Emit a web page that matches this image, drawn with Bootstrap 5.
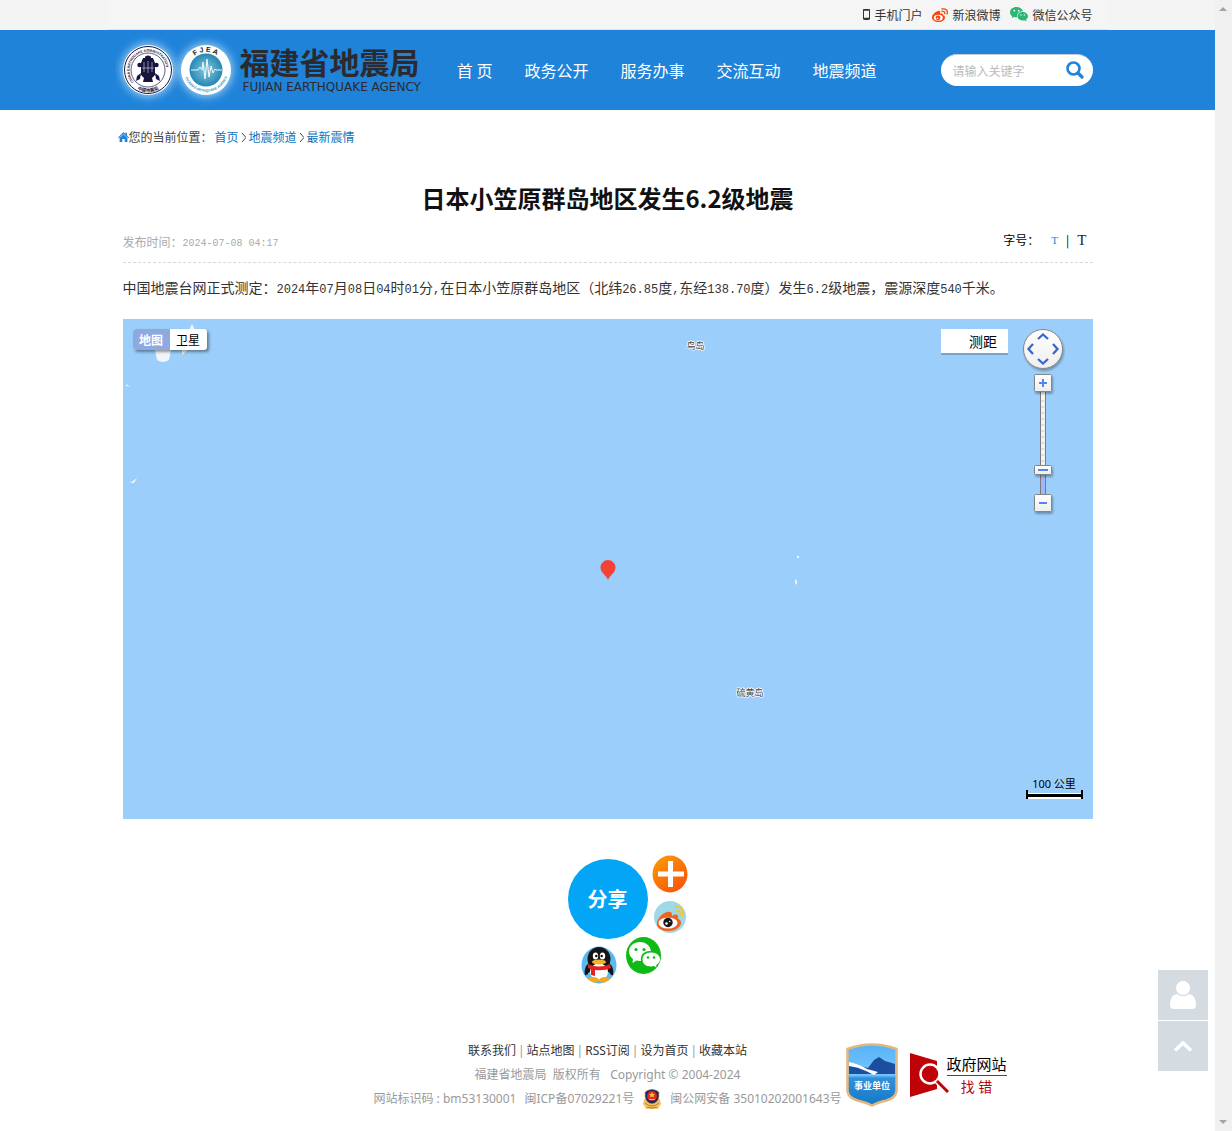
<!DOCTYPE html>
<html lang="zh-CN">
<head>
<meta charset="utf-8">
<meta name="viewport" content="width=device-width, initial-scale=1">
<title>日本小笠原群岛地区发生6.2级地震 - 福建省地震局</title>
<link href="https://cdn.jsdelivr.net/npm/bootstrap@5.3.0/dist/css/bootstrap.min.css" rel="stylesheet">
<script src="https://cdn.jsdelivr.net/npm/bootstrap@5.3.0/dist/js/bootstrap.bundle.min.js"></script>
<style>
body{font:12px/24px "Noto Sans CJK SC",sans-serif;color:#333;background:#fff;padding-right:17px}
a{color:inherit;text-decoration:none}
svg{display:block;flex:none}
.wrap{max-width:1000px;padding:0 15px}
.topbar{background:#f4f4f4}
.topbar .wrap{height:30px;background:#f5f5f5;border-bottom:1px solid #dfe3e8;gap:10px}
.topbar a{gap:4px}
.site-head{background:#1f83d9}
.site-head .wrap{min-height:80px}
.brand{color:#2c2a2e;margin-left:-8px}
.brand-name{font-size:30px;line-height:30px;font-weight:700}
.brand-en{font:12px/14px "DejaVu Sans",sans-serif;margin:4px 0 0 3px}
.site-nav{gap:32px;font-size:16px;color:#fff;margin-right:64px}
.search-box{width:152px;height:32px;border-radius:16px;background:#fff;border-top:1px solid #c4cdd6;padding:0 9px 0 12px}
.search-box input{border:0;outline:0;background:none;font-size:12px;padding:0;min-width:0}
.search-box input::placeholder{color:#bbb}
.search-box button{margin-bottom:2px}
.plain{border:0;background:none;padding:0}
.crumbs{padding:15px 10px 0;color:#444}
.crumbs a,.crumbs a:hover{color:#0f73bb}
.crumbs .sep{margin:0 3px}
.crumbs .here{margin-right:2px}
.art-title{font-size:24px;line-height:36px;font-weight:700;color:#111;margin:31px 0 14px}
.meta-row{height:33px;border-bottom:1px dashed #d9d9d9;color:#aaa}
.mono-date{font:10px/10px "Liberation Mono",monospace;vertical-align:1px}
.size-tool{height:20px;color:#000;padding-right:6px}
.size-tool button{font-family:"Liberation Serif",serif;line-height:20px;color:#222}
.size-tool .t-small{font-size:11px;color:#1f83d9;margin-left:4px}
.size-tool .t-large{font-size:15px}
.art-text{font-size:14px;line-height:24px;margin:12px 0 20px}
.num{font:12px/12px "Liberation Mono",monospace}
.map-area{height:500px;background:#9bcefa;overflow:hidden;color:#000}
.map-area>*{position:absolute}
.map-types{left:10px;top:10px;background:#fff;border-radius:3px;box-shadow:2px 2px 3px rgba(0,0,0,.4);overflow:hidden}
.map-types button{line-height:21px;width:37px;color:#000}
.map-types .on{background:#8ea8e0;color:#fff;font-weight:700}
.ruler{right:85px;top:10px;width:67px;line-height:24px;background:#fff;border-bottom:2px solid #79a5cd!important;font-size:14px;padding-left:18px}
.place{font-size:9px;line-height:12px;color:#444;text-shadow:1px 0 #fff,-1px 0 #fff,0 1px #fff,0 -1px #fff}
.zoomer{right:28px;top:8px}
.scale-bar{right:10px;bottom:20px;width:57px;text-align:center;font:11px/12px "Noto Sans","Noto Sans CJK SC",sans-serif}
.scale-bar i{display:block;height:9px;border:solid #000;border-width:0 2px;background:linear-gradient(#9bcefa 3px,#fff 3px,#fff 4px,#000 4px,#000 7px,#fff 7px)}
.share{width:160px;height:140px;margin:31px auto 0}
.share>*{position:absolute}
.share-main{left:40px;top:9px;width:80px;height:80px;border-radius:50%;background:#03a5f7;color:#fff;font-size:20px;font-weight:700}
.foot{font-family:"Noto Sans","Noto Sans CJK SC",sans-serif;color:#999;padding:49px 0 20px}
.foot a{color:#333}
.foot-links{gap:2px}
.foot-codes{gap:8px}
.side{flex:1 1 0}
.badges{gap:12px}
.find-err{font-size:15px;line-height:21px;color:#000!important}
.find-err span{margin-left:-2px}
.find-err b{font-weight:400;display:block;text-align:center}
.find-err b+b{color:#b7060b;border-top:1px solid #c4141b;font-size:14px}
.dock{right:24px;bottom:60px;gap:1px;z-index:5}
.dock a{width:50px;height:50px;background:#d4dbe1}
.rail{right:0;top:0;bottom:0;width:17px;background:#f0f0f0;padding:7px 0 7px 4px;z-index:6}
</style>
</head>
<body>
<div class="topbar">
  <div class="wrap mx-auto d-flex align-items-center justify-content-end">
    <a href="#" class="d-flex align-items-center"><svg width="7" height="11" viewBox="0 0 7 11"><rect x=".5" y=".5" width="6" height="10" rx="1" fill="#f5f5f5" stroke="#333"/><path d="M0 1h7M0 9.500h7" stroke="#333" stroke-width="1.500"/></svg>手机门户</a>
    <a href="#" class="d-flex align-items-center"><svg width="16" height="14" viewBox="0 0 16 14"><path d="M6 3C3 4 0 7 0 9.500 0 12 3 14 6.500 14S13 12 13 9.500c0-1.300-1-2-2-2.200.5-1.500-.6-2.500-3-1.500C8.500 3.500 8 2.500 6 3" fill="#f9470b"/><ellipse cx="6.300" cy="9.700" rx="4.500" ry="3" fill="#fff"/><circle cx="6" cy="9.800" r="2.400" fill="#f9470b"/><circle cx="5.500" cy="10.300" r=".8" fill="#fff"/><path d="M10 1c4-1 6.300 2 5 5M10 3.400c2-.5 3.200.8 2.700 2.300" fill="none" stroke="#f9470b" stroke-width="1.300" stroke-linecap="round"/></svg>新浪微博</a>
    <a href="#" class="d-flex align-items-center"><svg width="18" height="15" viewBox="0 0 18 15"><path d="M6.500 0C2.800 0 0 2.300 0 5.200c0 1.700.9 3.100 2.300 4.100L1.700 11l2.400-1.100c1 .3 2 .4 3 .3C6.500 7 9 4.200 13 4.300 12.300 1.700 9.700 0 6.500 0M12.500 5C9.600 5 7.500 7 7.500 9.300s2.200 4.200 5 4.200c.7 0 1.300-.1 1.900-.3L16.500 14.500 16 12.500c1.200-.8 2-1.900 2-3.200C18 7 15.500 5 12.500 5" fill="#2bb673"/><g fill="#fff"><circle cx="4.300" cy="3.700" r=".9"/><circle cx="8.700" cy="3.700" r=".9"/><circle cx="11" cy="8" r=".7"/><circle cx="14.300" cy="8" r=".7"/></g></svg>微信公众号</a>
  </div>
</div>
<header class="site-head">
  <div class="wrap mx-auto d-flex align-items-center">
    <a href="#" class="brand d-flex align-items-center">
      <svg width="125" height="80" viewBox="0 0 125 80">
        <defs><filter id="glow" x="-30%" y="-30%" width="160%" height="160%"><feGaussianBlur stdDeviation="4"/></filter>
        <radialGradient id="sea"><stop stop-color="#86c9dc"/><stop offset="1" stop-color="#2487b5"/></radialGradient>
        <path id="arcA" d="M18.800 51.900A18.500 18.500 0 1 1 47.200 51.900"/><path id="arcB" d="M18.900 56.900A22 22 0 0 0 47.100 56.900"/><path id="arcC" d="M75 31A18.500 18.500 0 0 1 108 33"/><path id="arcD" d="M69 44A22.500 22.500 0 0 0 113 44"/></defs>
        <g fill="#bfe2fb" opacity=".75" filter="url(#glow)"><circle cx="33" cy="40" r="27"/><circle cx="91" cy="40" r="27"/></g>
        <circle cx="33" cy="40" r="25" fill="#fff"/><circle cx="33" cy="40" r="23.500" fill="none" stroke="#151540"/><circle cx="33" cy="40" r="17" fill="none" stroke="#151540" stroke-width=".7"/>
        <text font-family="Liberation Sans" font-size="3.500" font-weight="700" fill="#151540"><textPath href="#arcA">CHINA EARTHQUAKE ADMINISTRATION</textPath></text>
        <text font-family="Noto Sans CJK SC" font-size="4.500" font-weight="700" fill="#151540"><textPath href="#arcB" startOffset="4">中国地震局</textPath></text>
        <g fill="#151540"><path d="M28 28h10l2 5v12l-4 4h-6l-4-4V33z"/><ellipse cx="33" cy="27.500" rx="3" ry="2"/><circle cx="24.500" cy="35" r="2.200"/><circle cx="41.500" cy="35" r="2.200"/><path d="M29 48h8l1 4H28zM22 46l4-3-1 6-4 2zM44 46l-4-3 1 6 4 2z"/></g><path d="M27 38h12M29 32v10M33 31v12M37 32v10" stroke="#fff" stroke-width=".5"/>
        <circle cx="91" cy="40" r="25" fill="#fff"/><circle cx="91" cy="40" r="16.500" fill="url(#sea)"/>
        <path d="M76 40h7l2-3 2 3 1-8 2 17 2-20 2 18 2-11 2 7 2-4 1 1h6" fill="none" stroke="#fff" stroke-width=".9"/>
        <text font-family="Liberation Sans" font-size="7" font-weight="700" fill="#222"><textPath href="#arcC" startOffset="7">F J E A</textPath></text>
        <text font-family="Liberation Sans" font-size="3.500" font-weight="700" fill="#2592c4"><textPath href="#arcD" startOffset="4">FUJIAN EARTHQUAKE AGENCY</textPath></text>
      </svg>
      <span><span class="brand-name d-block text-nowrap">福建省地震局</span><span class="brand-en d-block text-nowrap">FUJIAN EARTHQUAKE AGENCY</span></span>
    </a>
    <nav class="site-nav d-flex ms-auto text-nowrap"><a href="#">首 页</a><a href="#">政务公开</a><a href="#">服务办事</a><a href="#">交流互动</a><a href="#">地震频道</a></nav>
    <form class="search-box d-flex align-items-center">
      <input class="flex-grow-1" type="search" placeholder="请输入关键字" aria-label="请输入关键字">
      <button class="plain" type="button" aria-label="搜索"><svg width="18" height="18" viewBox="0 0 18 18" fill="none" stroke="#1f83d9"><circle cx="7.500" cy="7.500" r="6" stroke-width="2.600"/><path d="M12 12l4 4" stroke-width="3.200" stroke-linecap="round"/></svg></button>
    </form>
  </div>
</header>
<main>
  <div class="wrap crumbs mx-auto d-flex align-items-center">
    <svg width="11" height="10" viewBox="0 0 11 10" fill="#1f83d9"><path d="M5.500 0L7.500 2V.8h1.500v2.700L11 5.400l-.7.800L5.500 1.800.7 6.200 0 5.400z"/><path d="M5.500 2.200l3.900 3.700V10H6.700V7H4.300v3H1.600V5.900z"/></svg>
    <span class="here">您的当前位置：</span><a href="#">首页</a><svg class="sep" width="4" height="9" viewBox="0 0 4 9"><path d="M0 0l4 4.500L0 9" fill="none" stroke="#444"/></svg><a href="#">地震频道</a><svg class="sep" width="4" height="9" viewBox="0 0 4 9"><path d="M0 0l4 4.500L0 9" fill="none" stroke="#444"/></svg><a href="#">最新震情</a>
  </div>
  <article class="wrap mx-auto">
    <h1 class="art-title text-center">日本小笠原群岛地区发生6.2级地震</h1>
    <div class="meta-row d-flex justify-content-between">
      <span>发布时间：<time class="mono-date">2024-07-08 04:17</time></span>
      <div class="size-tool d-flex align-items-center gap-2"><span>字号：</span><button class="plain t-small">T</button><span>|</span><button class="plain t-large">T</button></div>
    </div>
    <p class="art-text">中国地震台网正式测定：<span class="num">2024</span>年<span class="num">07</span>月<span class="num">08</span>日<span class="num">04</span>时<span class="num">01</span>分<span class="num">,</span>在日本小笠原群岛地区（北纬<span class="num">26.85</span>度<span class="num">,</span>东经<span class="num">138.70</span>度）发生<span class="num">6.2</span>级地震，震源深度<span class="num">540</span>千米。</p>
    <div class="map-area position-relative">
      <svg width="90" height="170" viewBox="0 0 90 170" fill="#f1f5fb"><path d="M32 31h16l-2 10q-6 4-12 0zM66 11l3-6 3 6zM59 31h6l-6 5zM3 65l4 3-4-1zM7 164l7-5-3 5z"/></svg>
      <svg style="left:670px;top:234px" width="10" height="34" viewBox="0 0 10 34" fill="#f1f5fb"><path d="M4 2l3 3H4zM2 26l2 2v4l-2-2z"/></svg>
      <div class="map-types d-flex"><button class="plain on">地图</button><button class="plain">卫星</button></div>
      <button class="plain ruler">测距</button>
      <span class="place" style="left:564px;top:21px">鸟岛</span>
      <span class="place" style="left:614px;top:368px">硫黄岛</span>
      <svg class="top-50 start-50 translate-middle" width="16" height="40" viewBox="0 0 16 40"><path d="M8 31c-1-4-7.500-7-7.500-12.500a7.500 7.500 0 0 1 15 0C15.500 24 9 27 8 31" fill="#f44336"/></svg>
      <svg class="zoomer" width="44" height="190" viewBox="0 0 44 190">
        <defs><linearGradient id="btn" x2="0" y2="1"><stop stop-color="#fff"/><stop offset="1" stop-color="#eee"/></linearGradient><filter id="sh" x="-20%" y="-20%" width="150%" height="150%"><feDropShadow dx="1" dy="2" stdDeviation="1" flood-opacity=".3"/></filter></defs>
        <path d="M20 64h5v103h-5z" fill="#f4f4f4"/><path d="M20 146h5v21h-5z" fill="#9db8fb"/><path d="M19.500 65v102M24.500 65v102" stroke="#7a7a7a"/><path d="M20 74h5M20 80h5M20 86h5M20 92h5M20 98h5M20 104h5M20 110h5M20 116h5M20 122h5M20 128h5M20 134h5M20 152h5M20 159h5" stroke="#aaa" stroke-width=".5"/>
        <g fill="url(#btn)" stroke="#858585" filter="url(#sh)"><circle cx="22" cy="22" r="19.500"/><rect x="13.500" y="47.500" width="17" height="17" rx="1"/><rect x="13.500" y="138.500" width="17" height="9" rx="1"/><rect x="13.500" y="167.500" width="17" height="17" rx="1"/></g>
        <path d="M17 12l5-4.500 5 4.500M17 32l5 4.500 5-4.500M12 17l-4.500 5 4.500 5M32 17l4.500 5-4.500 5" fill="none" stroke="#3968cc" stroke-width="2.300"/><path d="M18 56h8M22 52v8M17 143h10M18 176h8" stroke="#5585ec" stroke-width="2"/>
      </svg>
      <div class="scale-bar">100 公里<i></i></div>
    </div>
    <div class="share position-relative">
      <button class="plain share-main">分享</button>
      <a href="#" aria-label="更多" style="left:124px;top:5px"><svg width="36" height="38" viewBox="0 0 36 38"><defs><linearGradient id="or" x2=".7" y2="1"><stop stop-color="#fb9f07"/><stop offset="1" stop-color="#fa5409"/></linearGradient></defs><ellipse cx="18" cy="19" rx="17.500" ry="18.500" fill="url(#or)"/><path d="M18.500 6v26M6 19h26" stroke="#fff" stroke-width="5"/></svg></a>
      <a href="#" aria-label="新浪微博" style="left:126px;top:51px"><svg width="33" height="33" viewBox="0 0 33 33"><circle cx="16" cy="16" r="16" fill="#9fd8e8"/><path d="M13 11c-5 1-11 8-10 13 1 4 6 6 12 6 7 0 13-5 12-9-.5-2-2-3-3-3 1-4-1-6-6-3 0-4-1-5-5-4" fill="#f06318"/><ellipse cx="14" cy="22" rx="9.500" ry="5.500" fill="#fff"/><circle cx="14" cy="21.500" r="4.700" fill="#161616"/><circle cx="12.500" cy="22.500" r="1.300" fill="#fff"/><circle cx="15.800" cy="20.500" r=".8" fill="#fff"/><path d="M21 6c6-2 10 4 7 10M22 10c3-.5 5 1.500 4 4" fill="none" stroke="#efc83a" stroke-width="2"/></svg></a>
      <a href="#" aria-label="微信" style="left:98px;top:87px"><svg width="36" height="38" viewBox="0 0 36 38"><defs><clipPath id="wc"><ellipse cx="17.500" cy="18.500" rx="17.500" ry="18.500"/></clipPath></defs><ellipse cx="17.500" cy="18.500" rx="17.500" ry="18.500" fill="#0fb916"/><path d="M14 5C8 5 3 9 3 14.500c0 3 1.500 5.500 4 7.500l-.5 4 4-2.500c1.500.4 3 .5 4.500.4C14 18 18 13.500 25 14 24 8 19 5 14 5" fill="#fff"/><path clip-path="url(#wc)" d="M25 15c-5 0-9 3-9 7.500s4 7.500 9 7.500c1 0 2-.2 3-.5l3.500 2-1-3.200c2.300-1.500 4-3.500 4-5.800C34.500 18 30 15 25 15" fill="#fff" stroke="#0fb916"/><g fill="#0fb916"><circle cx="10" cy="12.500" r="1.600"/><circle cx="18" cy="12.500" r="1.600"/><circle cx="22" cy="20.500" r="1.300"/><circle cx="28" cy="20.500" r="1.300"/></g></svg></a>
      <a href="#" aria-label="QQ" style="left:53px;top:96px"><svg width="36" height="38" viewBox="0 0 36 38"><defs><clipPath id="qc"><ellipse cx="18" cy="19" rx="17.500" ry="18.500"/></clipPath></defs><g clip-path="url(#qc)"><path fill="#5abaf0" d="M0 0h36v38H0z"/><path d="M8 17c-4 3-5 8-4 12 1 1 3-1 4-3h20c1 2 3 4 4 3 1-4 0-9-4-12z" fill="#151515"/><ellipse cx="18" cy="13" rx="11.500" ry="12" fill="#151515"/><ellipse cx="18" cy="26" rx="9" ry="8.500" fill="#fff"/><ellipse cx="14.500" cy="10" rx="2.700" ry="3.500" fill="#fff"/><ellipse cx="21.500" cy="10" rx="2.700" ry="3.500" fill="#fff"/><circle cx="15.300" cy="10" r="1.200"/><circle cx="20.700" cy="10" r="1.200"/><ellipse cx="18" cy="16" rx="7" ry="2.500" fill="#f5b326"/><path d="M7 18q11 5 22 0l1 4q-6 3-16 2v6l-4-1v-6l-3-1z" fill="#e42020"/><ellipse cx="12" cy="34" rx="6" ry="3" fill="#f5a81c"/><ellipse cx="24" cy="34" rx="6" ry="3" fill="#f5a81c"/></g></svg></a>
    </div>
  </article>
</main>
<footer class="foot d-flex align-items-center">
  <div class="side"></div>
  <div class="text-center text-nowrap">
    <div class="foot-links d-flex justify-content-center"><a href="#">联系我们</a>|<a href="#">站点地图</a>|<a href="#">RSS订阅</a>|<a href="#">设为首页</a>|<a href="#">收藏本站</a></div>
    <div>福建省地震局&nbsp; 版权所有 &nbsp; Copyright © 2004-2024</div>
    <div class="foot-codes d-flex align-items-center"><span>网站标识码 : bm53130001</span><span>闽ICP备07029221号</span><svg width="20" height="20" viewBox="0 0 20 20"><path d="M2 10l-1 5 3 5h12l3-5-1-5z" fill="#f3c568"/><path d="M3 14q7 6 14 0M5 18q5 2 10 0" stroke="#bf7b25" fill="none"/><path d="M10 0q5 1 7 3v5q-1 6-7 7-6-1-7-7V3q2-2 7-3" fill="#192764" stroke="#e9b153" stroke-width=".7"/><circle cx="10" cy="7" r="5" fill="#e22a1d"/><path d="M10 3l1 2h2l-1.500 1.500.5 2-2-1-2 1 .5-2L7 5h2zM7 10h6v1H7z" fill="#f6c23c"/></svg><span>闽公网安备 35010202001643号</span></div>
  </div>
  <div class="side badges d-flex align-items-center">
    <a href="#" class="ms-1" aria-label="事业单位"><svg width="52" height="64" viewBox="0 0 52 64"><defs><linearGradient id="sky" x2="0" y2="1"><stop stop-color="#56b2f6"/><stop offset=".5" stop-color="#75c6ff"/><stop offset=".55" stop-color="#328fda"/><stop offset="1" stop-color="#1479c7"/></linearGradient></defs><path d="M1.500 6Q26-3 50.500 6v42q-1 7-10 9.500-9 2-14.500 5-6-3-14.500-5Q2.500 55 1.500 48z" fill="url(#sky)" stroke="#e2b77f" stroke-width="2.500"/><path d="M3 31V20l7 2 12 3 6-8 5-3 6 4 10 3v10z" fill="#1c4d9f"/><path d="M3 19q12 3 18 7l11 3-4 3-8-4Q12 24 3 23z" fill="#fff"/><text x="26" y="46" text-anchor="middle" font-family="Noto Sans CJK SC" font-size="9" font-weight="700" fill="#fff">事业单位</text></svg></a>
    <a href="#" class="find-err d-flex align-items-center text-nowrap"><svg width="39" height="44" viewBox="0 0 39 44"><path d="M0 0l27 8v28L0 44z" fill="#be0207"/><path d="M26 27l11 11" stroke="#fff" stroke-width="6"/><circle cx="20" cy="21" r="9.500" fill="#be0207" stroke="#fff" stroke-width="2.500"/><path d="M27 28l11 11" stroke="#be0207" stroke-width="3"/></svg><span><b>政府网站</b><b>找 错</b></span></a>
  </div>
</footer>
<div class="dock position-fixed d-flex flex-column">
  <a href="#" aria-label="用户" class="d-flex align-items-center justify-content-center"><svg width="28" height="30" viewBox="0 0 28 30" fill="#fff"><path d="M8 14q6 4 12 0 7 1 7 11 0 4-4 4H5q-4 0-4-4 0-10 7-11"/><circle cx="14" cy="8" r="7.500" stroke="#d4dbe1"/></svg></a>
  <a href="#" aria-label="返回顶部" class="d-flex align-items-center justify-content-center"><svg width="20" height="12" viewBox="0 0 20 12"><path d="M2 10.500l8-7.500 8 7.500" fill="none" stroke="#fff" stroke-width="3.500"/></svg></a>
</div>
<div class="rail position-fixed d-flex flex-column justify-content-between" aria-hidden="true"><svg width="8" height="4" viewBox="0 0 8 4"><path d="M0 4l4-4 4 4z" fill="#a3a3a3"/></svg><svg width="8" height="4" viewBox="0 0 8 4"><path d="M0 0l4 4 4-4z" fill="#a3a3a3"/></svg></div>
</body>
</html>
